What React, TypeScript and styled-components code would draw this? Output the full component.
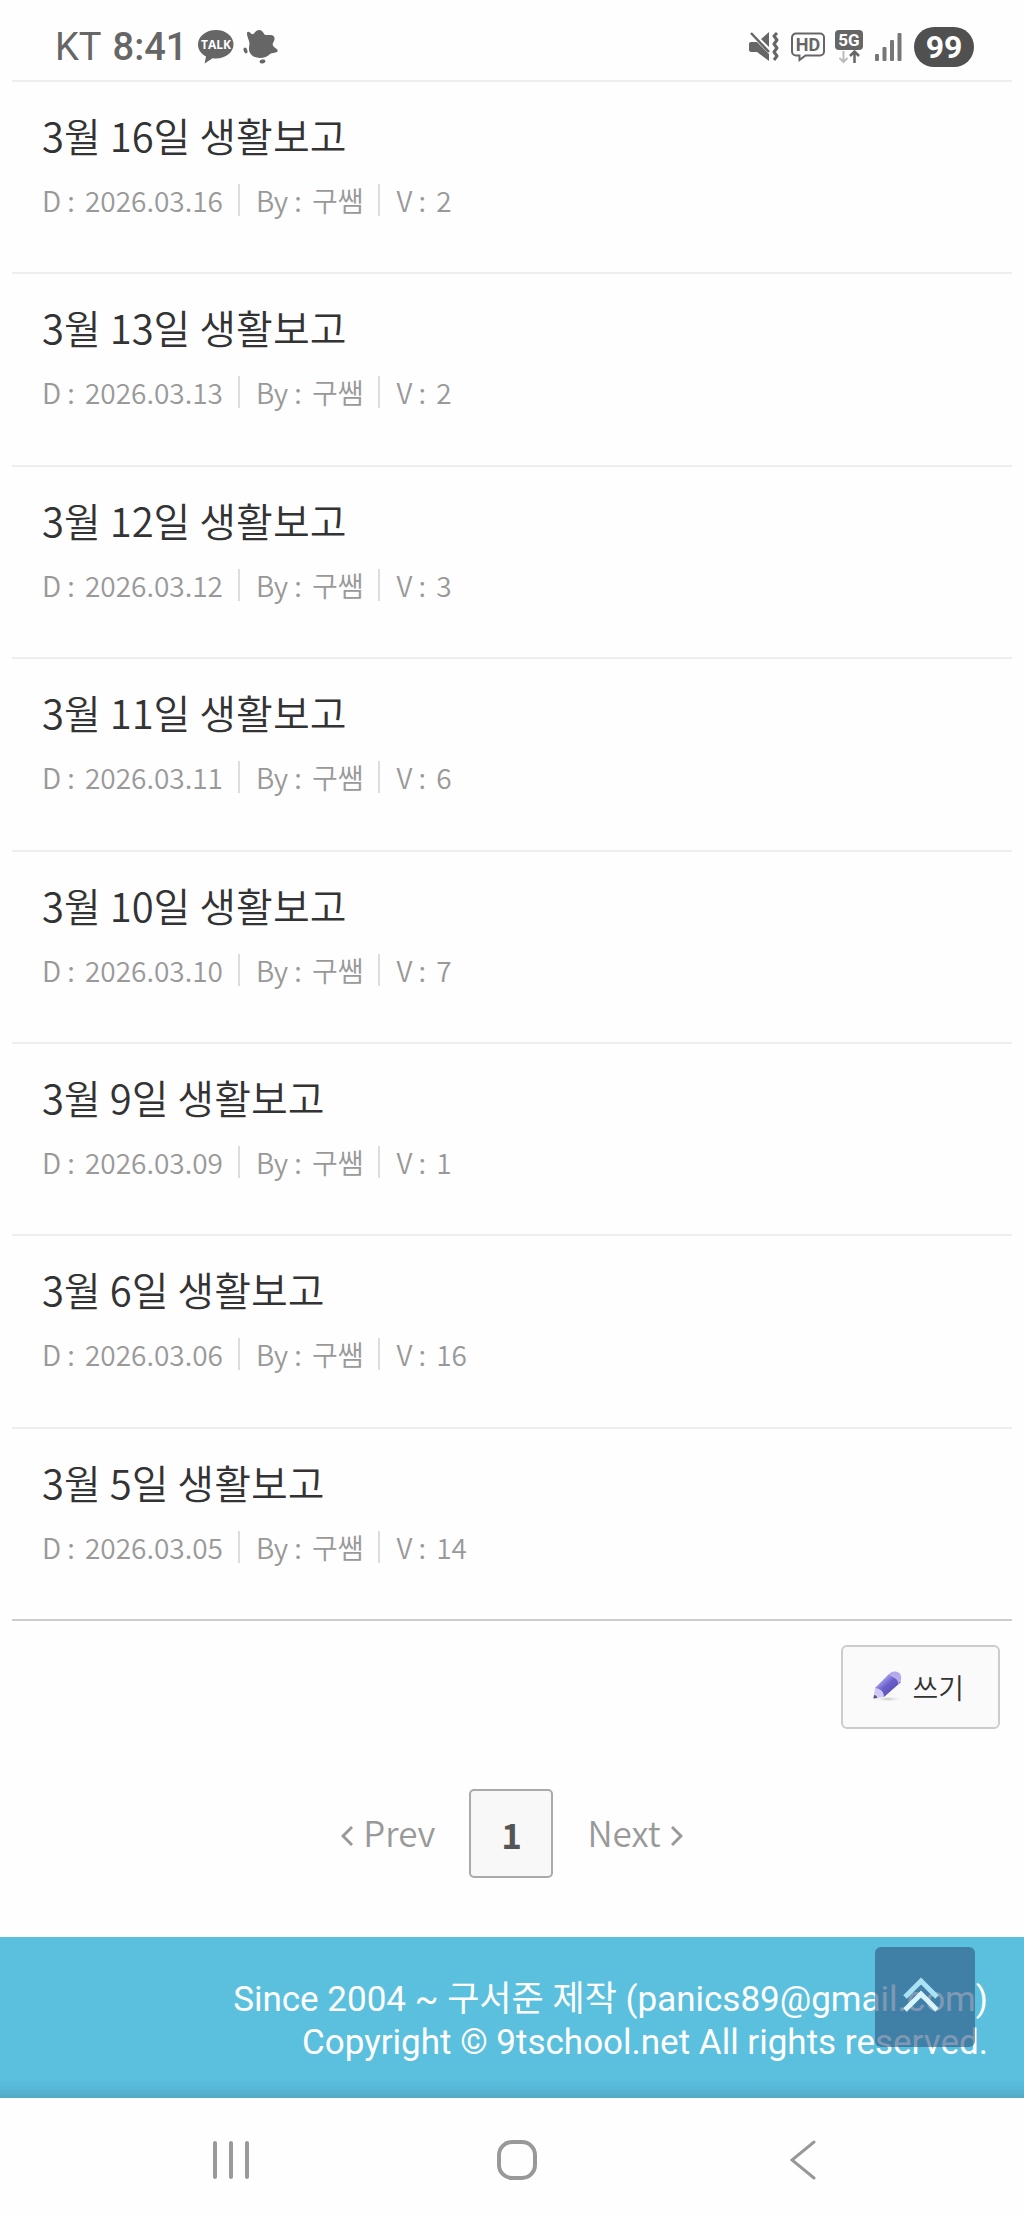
import React from 'react';
import styled, { createGlobalStyle } from 'styled-components';

const GlobalStyle = createGlobalStyle`
  *, *::before, *::after { box-sizing: border-box; }
  body { margin: 0; background: #fefefe; }
  button { margin: 0; padding: 0; border: 0; background: none; font: inherit; color: inherit; cursor: pointer; }
  a { color: inherit; text-decoration: none; }
  svg { display: block; flex: none; }
`;

const Page = styled.div`
  display: flex;
  flex-direction: column;
  min-height: 100vh;
  background: #fefefe;
  color: #333;
  font-family: 'Noto Sans CJK KR', 'Noto Sans', sans-serif;
  font-weight: 350;
`;

const StatusBar = styled.header`
  display: flex;
  align-items: center;
  justify-content: space-between;
  height: 80px;
  padding: 14px 50px 0 55px;
  color: #666;
  font-family: Roboto, sans-serif;
`;

const StatusGroup = styled.div<{ $gap: number }>`
  display: flex;
  align-items: center;
  gap: ${(p) => p.$gap}px;
`;

const StatusText = styled.span<{ $strong?: boolean }>`
  font-size: 38px;
  line-height: 40px;
  font-weight: ${(p) => (p.$strong ? 500 : 400)};
`;

const Battery = styled.span`
  display: flex;
  align-items: center;
  justify-content: center;
  width: 60px;
  height: 40px;
  border-radius: 20px;
  background: #505050;
  color: #fff;
  font-size: 32px;
  font-weight: 700;
  line-height: 40px;
`;

const Main = styled.main`
  display: flex;
  flex: 1;
  flex-direction: column;
  padding: 0 12px;
`;

const PostList = styled.ul`
  display: flex;
  flex: 1;
  flex-direction: column;
  margin: 0;
  padding: 0;
  list-style: none;
  border-bottom: 2px solid #ccc;
`;

const PostRow = styled.li`
  flex: 1;
  padding: 29px 30px 52px;
  border-top: 2px solid #eee;
`;

const PostTitle = styled.a`
  display: block;
  font-size: 40px;
  line-height: 48px;
`;

const Meta = styled.div`
  display: flex;
  align-items: center;
  margin-top: 25px;
  color: #999;
  font-size: 28px;
  line-height: 32px;
`;

const MetaItem = styled.span`
  display: flex;
  gap: 10px;

  & + & {
    margin-left: 15px;
    padding-left: 16px;
    border-left: 2px solid #ddd;
  }
`;

const Actions = styled.div`
  display: flex;
  justify-content: flex-end;
  padding: 24px 12px 0;
`;

const WriteButton = styled.button`
  display: flex;
  align-items: center;
  justify-content: center;
  gap: 8px;
  height: 84px;
  padding: 0 34px 0 28px;
  border: 2px solid #ccc;
  border-radius: 6px;
  background: #fafafa;
  color: #333;
  font-size: 28px;
  line-height: 40px;
`;

const Pagination = styled.nav`
  display: flex;
  align-items: center;
  justify-content: center;
  gap: 34px;
  padding: 60px 0 59px;
  color: #999;
  font-size: 35px;
  line-height: 48px;
`;

const PageLink = styled.a`
  display: flex;
  align-items: center;
  gap: 10px;
  padding-bottom: 4px;

  svg {
    margin-top: 8px;
  }
`;

const CurrentPage = styled.a`
  display: flex;
  align-items: center;
  justify-content: center;
  width: 84px;
  height: 89px;
  border: 2px solid #aaa;
  border-radius: 5px;
  background: #f8f8f8;
  color: #555;
  font-weight: 700;
`;

const Footer = styled.footer`
  position: relative;
  padding: 41px 36px 34px;
  background: linear-gradient(to top, #52a9c2 0, #58b8d8 10px, #5bbfde 20px);
  color: #fff;
  font-family: Roboto, 'Noto Sans CJK KR', sans-serif;
  font-size: 35px;
  font-weight: 400;
  line-height: 43px;
  text-align: right;
`;

const FooterLine = styled.p`
  margin: 0;
`;

const TopButton = styled.button`
  position: absolute;
  top: 10px;
  right: 49px;
  display: flex;
  align-items: center;
  justify-content: center;
  width: 100px;
  height: 100px;
  padding: 0 8px 4px 0;
  border-radius: 6px;
  background: rgba(48, 89, 132, 0.62);
`;

const SystemNav = styled.nav`
  display: flex;
  height: 120px;
  padding: 4px 78px 0 88px;
`;

const SystemButton = styled.button`
  display: flex;
  flex: 1;
  align-items: center;
  justify-content: center;
`;

const posts = [
  { title: '3월 16일 생활보고', date: '2026.03.16', views: 2 },
  { title: '3월 13일 생활보고', date: '2026.03.13', views: 2 },
  { title: '3월 12일 생활보고', date: '2026.03.12', views: 3 },
  { title: '3월 11일 생활보고', date: '2026.03.11', views: 6 },
  { title: '3월 10일 생활보고', date: '2026.03.10', views: 7 },
  { title: '3월 9일 생활보고', date: '2026.03.09', views: 1 },
  { title: '3월 6일 생활보고', date: '2026.03.06', views: 16 },
  { title: '3월 5일 생활보고', date: '2026.03.05', views: 14 },
];

const TalkIcon = () => (
  <svg width="36" height="34" viewBox="0 0 36 34" aria-hidden="true">
    <path d="M18 0C8 0 0 6.300 0 14.500c0 5.100 3.200 9.500 8 12L6.600 33.500l8-5.300c1.100.2 2.200.3 3.400.3 10 0 17.500-6.300 17.500-14.200S28 0 18 0z" fill="#666" />
    <text x="18" y="19" textAnchor="middle" fontFamily="Open Sans, sans-serif" fontSize="12" fontWeight="700" fill="#fff">TALK</text>
  </svg>
);

const SplatIcon = () => (
  <svg width="36" height="34" viewBox="0 0 36 34" fill="#666" aria-hidden="true">
    <path d="M4.500 2c1-.8 2.200 0 3.500 1.500C9 4.500 10 4.500 11 3.500 12.500 1.500 14 0 16 0c2.500 0 4 2 5.500 4.500 2 1.500 7-.5 9 1.500s1 4.500-.5 7c-1 2 .5 4 3 5.500 1.500 1 2.500 2.500 1 3.500-2 1.200-5 .5-7 2-2.500 2.500-6 4-10 4C11 28 6.500 24.500 6 19.500c-.2-2.500.5-4 .5-6C6.500 10 2.500 4 4.500 2z" />
    <ellipse cx="2.500" cy="20.500" rx="1.800" ry="3" transform="rotate(-20 2.500 20.500)" />
    <ellipse cx="19.500" cy="31.500" rx="3" ry="2" transform="rotate(-12 19.500 31.500)" />
  </svg>
);

const MuteIcon = () => (
  <svg width="30" height="30" viewBox="0 0 30 30" aria-hidden="true">
    <path d="M0 12c0-1.200.8-2 2-2h6l12 12v7L8 20H2.500C1 20 0 19 0 18zM12 7l8-7v15z" fill="#666" />
    <path d="M2 1l18 19" stroke="#666" strokeWidth="2.500" />
    <path d="M28 1l-3 3 3 4-3 4 3 4-3 4 3 4-3 4" fill="none" stroke="#666" strokeWidth="3" strokeLinejoin="round" />
  </svg>
);

const HdIcon = () => (
  <svg width="34" height="30" viewBox="0 0 34 30" aria-hidden="true">
    <path d="M5 1.500h24a4 4 0 0 1 4 4v14a4 4 0 0 1-4 4H14.500L8.500 28v-4.500H5a4 4 0 0 1-4-4v-14a4 4 0 0 1 4-4z" fill="none" stroke="#666" strokeWidth="2" />
    <text x="17" y="19" textAnchor="middle" fontFamily="Roboto, sans-serif" fontSize="18" fontWeight="700" fill="#666">HD</text>
  </svg>
);

const NetworkIcon = () => (
  <svg width="28" height="34" viewBox="0 0 28 34" aria-hidden="true">
    <rect width="28" height="20" rx="4" fill="#666" />
    <text x="14" y="16" textAnchor="middle" fontFamily="Roboto, sans-serif" fontSize="17" fontWeight="700" fill="#fff">5G</text>
    <path d="M8.500 21v11M4.500 28l4 4 4-4" fill="none" stroke="#bbb" strokeWidth="2" />
    <path d="M19.500 33V22M15 26l4.500-4.500L24 26" fill="none" stroke="#666" strokeWidth="2.500" />
  </svg>
);

const SignalIcon = () => (
  <svg width="27" height="28" viewBox="0 0 27 28" fill="#777" aria-hidden="true">
    <rect x="0" y="21" width="4" height="7" rx="1" />
    <rect x="7.500" y="14" width="4" height="14" rx="1" />
    <rect x="15" y="7" width="4" height="21" rx="1" />
    <rect x="22.500" y="0" width="4" height="28" rx="1" />
  </svg>
);

const PencilIcon = () => (
  <svg width="33" height="32" viewBox="0 0 33 32" aria-hidden="true">
    <defs>
      <linearGradient id="pencilBody" x1="0.250" y1="0.250" x2="0.750" y2="0.750">
        <stop offset="0" stopColor="#a59ee8" />
        <stop offset="0.450" stopColor="#6a60cc" />
        <stop offset="1" stopColor="#5a50b2" />
      </linearGradient>
      <radialGradient id="pencilShade">
        <stop offset="0" stopColor="#c4c4c4" />
        <stop offset="1" stopColor="#fafafa" stopOpacity="0" />
      </radialGradient>
    </defs>
    <ellipse cx="17" cy="28" rx="15" ry="3" fill="url(#pencilShade)" />
    <path d="M4 17L18 3l12 8-17 15z" fill="url(#pencilBody)" />
    <path d="M17 4l3.500-3c1.500-1 6.500-.5 8 1s2 4.500 1.500 7L27 13.500c.5-5-4-9-10-9.500z" fill="#b5aaec" />
    <path d="M4 17L2.500 27.500 13 26c0-5-3.500-8.500-9-9z" fill="#cfc8f6" />
    <path d="M3 24l-.5 3.500 3.800-.5c-.3-1.800-1.400-2.800-3.300-3z" fill="#5a5078" />
  </svg>
);

const Chevron = ({ d }: { d: string }) => (
  <svg width="12" height="20" viewBox="0 0 12 20" fill="none" stroke="#999" strokeWidth="3" aria-hidden="true">
    <path d={d} />
  </svg>
);

export default function App() {
  return (
    <Page>
      <GlobalStyle />
      <StatusBar>
        <StatusGroup $gap={11}>
          <StatusText>KT</StatusText>
          <StatusText $strong>8:41</StatusText>
          <StatusGroup $gap={9}>
            <TalkIcon />
            <SplatIcon />
          </StatusGroup>
        </StatusGroup>
        <StatusGroup $gap={12}>
          <MuteIcon />
          <StatusGroup $gap={10}>
            <HdIcon />
            <NetworkIcon />
          </StatusGroup>
          <SignalIcon />
          <Battery>99</Battery>
        </StatusGroup>
      </StatusBar>

      <Main>
        <PostList>
          {posts.map((post) => (
            <PostRow key={post.date}>
              <PostTitle href="#">{post.title}</PostTitle>
              <Meta>
                <MetaItem>
                  <span>D :</span>
                  <span>{post.date}</span>
                </MetaItem>
                <MetaItem>
                  <span>By :</span>
                  <span>구쌤</span>
                </MetaItem>
                <MetaItem>
                  <span>V :</span>
                  <span>{post.views}</span>
                </MetaItem>
              </Meta>
            </PostRow>
          ))}
        </PostList>
        <Actions>
          <WriteButton type="button">
            <PencilIcon />
            쓰기
          </WriteButton>
        </Actions>
        <Pagination aria-label="Pagination">
          <PageLink href="#">
            <Chevron d="M11 1L2 10l9 9" />
            Prev
          </PageLink>
          <CurrentPage href="#" aria-current="page">1</CurrentPage>
          <PageLink href="#">
            Next
            <Chevron d="M1 1l9 9-9 9" />
          </PageLink>
        </Pagination>
      </Main>

      <Footer>
        <FooterLine>Since 2004 ~ 구서준 제작 (panics89@gmail.com)</FooterLine>
        <FooterLine>Copyright © 9tschool.net All rights reserved.</FooterLine>
        <TopButton type="button" aria-label="Back to top">
          <svg width="36" height="36" viewBox="0 0 36 36" fill="none" strokeWidth="5" aria-hidden="true">
            <path d="M2 20L18 4l16 16" stroke="#a9e2f5" />
            <path d="M2 33L18 17l16 16" stroke="#d8f5fd" />
          </svg>
        </TopButton>
      </Footer>

      <SystemNav aria-label="System">
        <SystemButton type="button" aria-label="Recent apps">
          <svg width="38" height="40" viewBox="0 0 38 40" stroke="#999" strokeWidth="4" strokeLinecap="round">
            <path d="M3 3v34M19 3v34M35 3v34" />
          </svg>
        </SystemButton>
        <SystemButton type="button" aria-label="Home">
          <svg width="40" height="40" viewBox="0 0 40 40" fill="none" stroke="#999" strokeWidth="4">
            <rect x="2" y="2" width="36" height="36" rx="13" />
          </svg>
        </SystemButton>
        <SystemButton type="button" aria-label="Back">
          <svg width="26" height="40" viewBox="0 0 26 40" fill="none" stroke="#999" strokeWidth="3" strokeLinecap="round">
            <path d="M24 2L2 20l22 18" />
          </svg>
        </SystemButton>
      </SystemNav>
    </Page>
  );
}
